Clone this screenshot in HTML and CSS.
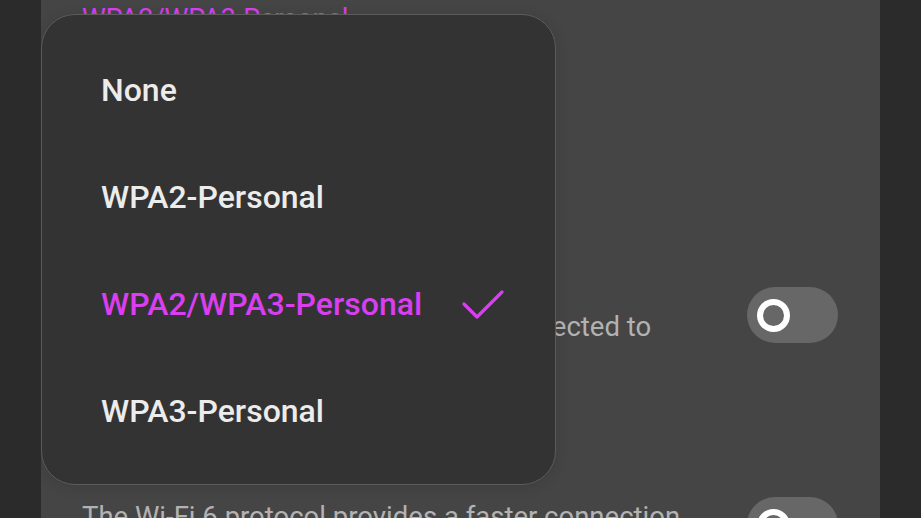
FILE: index.html
```html
<!DOCTYPE html>
<html lang="en">
<head>
<meta charset="utf-8">
<title>Mobile Hotspot – Security</title>
<link rel="stylesheet" href="styles.css">
</head>
<body>
<div class="screen">
  <div class="panel">
    <div class="list">
      <div class="row row--first">
        <div class="row-text">
          <div class="title">Security</div>
          <div class="value">WPA2/WPA3-Personal</div>
        </div>
      </div>
      <div class="row">
        <div class="row-text">
          <div class="title">Password</div>
          <div class="desc">••••••••••</div>
        </div>
      </div>
      <div class="row">
        <div class="row-text">
          <div class="title">Hide my device</div>
          <div class="desc">Other devices can't see your<br>hotspot unless they've previously connected to<br>it.</div>
        </div>
        <div class="switch switch--a"><span class="knob"></span></div>
      </div>
      <div class="row row--wifi6">
        <div class="row-text">
          <div class="title">Wi-Fi 6 standard</div>
          <div class="desc">The Wi-Fi 6 protocol provides a faster connection<br>with compatible devices.</div>
        </div>
        <div class="switch switch--b"><span class="knob"></span></div>
      </div>
    </div>

    <div class="menu" role="listbox">
      <div class="menu-item">None</div>
      <div class="menu-item">WPA2-Personal</div>
      <div class="menu-item is-selected">
        <span>WPA2/WPA3-Personal</span>
        <svg class="check" width="46" height="33" viewBox="0 0 46 33" aria-hidden="true">
          <polyline points="4,16 17,29 42,4" fill="none" stroke="#d93ef1" stroke-width="3.2" stroke-linecap="round" stroke-linejoin="round"/>
        </svg>
      </div>
      <div class="menu-item">WPA3-Personal</div>
    </div>
  </div>
</div>
</body>
</html>
```

FILE: styles.css
```css
html, body {
  margin: 0;
  padding: 0;
}

body {
  background: #2b2b2b;
  font-family: Roboto, "Noto Sans", "Liberation Sans", sans-serif;
  overflow: hidden;
}

.screen {
  width: 921px;
  height: 518px;
  overflow: hidden;
}

.panel {
  position: relative;
  margin-left: 41px;
  width: 839px;
  height: 518px;
  background: #454545;
  overflow: hidden;
}

.list {
  margin-top: -69px;
  padding: 0 42px 0 41px;
}

.row {
  display: flex;
  align-items: flex-start;
  justify-content: space-between;
  padding: 30px 0;
}

.row--wifi6 {
  padding-top: 36px;
}

.row--wifi6 .desc {
  margin-top: 12px;
}

.row-text {
  display: flex;
  flex-direction: column;
}

.title {
  font-size: 30px;
  line-height: 40px;
  color: #ececec;
}

.value {
  font-size: 26.8px;
  line-height: 36px;
  color: #d93ef1;
}

.desc {
  font-size: 27.5px;
  line-height: 36px;
  color: #b2b2b2;
  white-space: nowrap;
}

.switch {
  flex: none;
  width: 91px;
  height: 56px;
  box-sizing: border-box;
  border-radius: 28px;
  background: #676767;
  display: flex;
  align-items: center;
  padding-left: 10px;
}

.switch--a {
  margin-top: 54px;
}

.switch--b {
  margin-top: 50px;
}

.knob {
  width: 33px;
  height: 33px;
  box-sizing: border-box;
  border-radius: 50%;
  border: 6.5px solid #ffffff;
}

.menu {
  position: absolute;
  left: 0;
  top: 14px;
  width: 515px;
  height: 471px;
  box-sizing: border-box;
  background: #333333;
  border: 1px solid #5b5b5b;
  border-radius: 34px;
  padding: 21px 49px 19px 59px;
  display: flex;
  flex-direction: column;
  box-shadow: 0 2px 14px rgba(0, 0, 0, 0.12);
}

.menu-item {
  flex: 1;
  display: flex;
  align-items: center;
  justify-content: space-between;
  font-size: 32px;
  font-weight: 500;
  color: #ececec;
}

.menu-item.is-selected {
  color: #d93ef1;
}

.check {
  display: block;
}
```
